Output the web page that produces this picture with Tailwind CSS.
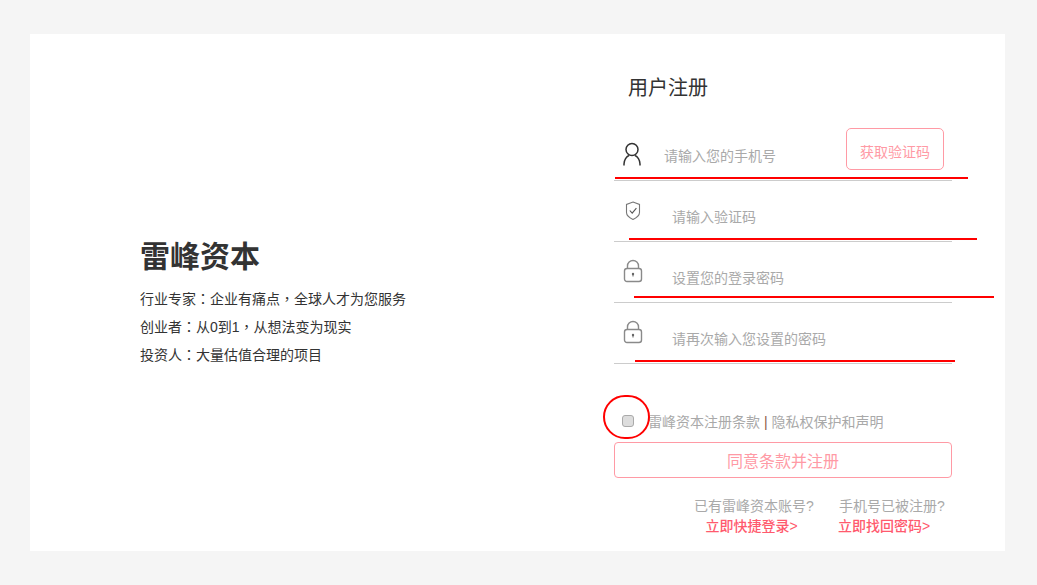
<!DOCTYPE html>
<html lang="zh-CN">
<head>
<meta charset="utf-8">
<script src="https://cdn.jsdelivr.net/npm/@tailwindcss/browser@4"></script>
</head>
<body class="bg-[#f5f5f5] font-['Liberation_Sans','Noto_Sans_CJK_SC',sans-serif]">
<div class="w-[1037px] h-[585px] pt-[34px] pl-[30px] overflow-hidden">
  <div class="relative w-[975px] h-[517px] bg-white flex">
    <div class="w-[584px] pl-[110px] pt-[201px]">
      <h1 class="text-[30px] leading-[44px] font-bold text-[#333]">雷峰资本</h1>
      <div class="mt-[6px] text-[14px] leading-[28px] text-[#333]">
        <p>行业专家<span lang="zh-TW" class="leading-none font-['Noto_Sans_CJK_TC']">：</span>企业有痛点<span lang="zh-TW" class="leading-none font-['Noto_Sans_CJK_TC']">，</span>全球人才为您服务</p>
        <p>创业者<span lang="zh-TW" class="leading-none font-['Noto_Sans_CJK_TC']">：</span>从0到1<span lang="zh-TW" class="leading-none font-['Noto_Sans_CJK_TC']">，</span>从想法变为现实</p>
        <p>投资人<span lang="zh-TW" class="leading-none font-['Noto_Sans_CJK_TC']">：</span>大量估值合理的项目</p>
      </div>
    </div>
    <div class="w-[338px]">
      <h2 class="mt-[40px] ml-[14px] text-[20px] leading-[28px] text-[#333]">用户注册</h2>
      <div class="mt-[18px]">
        <div class="h-[61px] border-b border-[#ccc] flex items-center">
          <svg class="ml-[9px] mt-[7px] w-[18px] h-[24px]" viewBox="0 0 18 24" fill="none" stroke="#333" stroke-width="1.5"><circle cx="9" cy="7.500" r="6"/><path d="M1 23.500v-1.500c0-4 2.500-7.500 5-8.500M17 23.500v-1.500c0-4-2.500-7.500-5-8.500"/></svg>
          <span class="ml-[23px] mt-[12px] text-[14px] text-[#a9a9a9]">请输入您的手机号</span>
          <button class="ml-auto mr-[8px] mb-[2px] pt-[6px] w-[98px] h-[42px] rounded-[5px] border border-[#ff9aa5] text-[14px] text-[#ff9aa5]">获取验证码</button>
        </div>
        <div class="h-[61px] border-b border-[#ccc] flex items-center">
          <svg class="ml-[11px] self-start mt-[20px] w-[16px] h-[20px]" viewBox="0 0 16 20" fill="none" stroke="#777" stroke-width="1.100"><path d="M8 1l6.500 2.500v8c0 3-3.500 5.500-6.500 7-3-1.500-6.500-4-6.500-7v-8z"/><path d="M4.800 9.500l2.400 2.700 4.200-5" stroke="#555"/></svg>
          <span class="ml-[31px] mt-[13px] text-[14px] text-[#a9a9a9]">请输入验证码</span>
        </div>
        <div class="h-[61px] border-b border-[#ccc] flex items-center">
          <svg class="ml-[9px] self-start mt-[17px] w-[20px] h-[24px]" viewBox="0 0 20 24" fill="none" stroke="#8a8a8a" stroke-width="1.400"><rect x="1.500" y="9.500" width="17" height="13" rx="2.500"/><path d="M4.500 9.500V7a5.500 5.500 0 0 1 11 0v2.500"/><circle cx="10" cy="15" r="1.200" fill="#666" stroke="none"/><path d="M10 15v2.500" stroke="#666" stroke-width="1"/></svg>
          <span class="ml-[29px] mt-[13px] text-[14px] text-[#a9a9a9]">设置您的登录密码</span>
        </div>
        <div class="h-[61px] border-b border-[#ccc] flex items-center">
          <svg class="ml-[9px] self-start mt-[17px] w-[20px] h-[24px]" viewBox="0 0 20 24" fill="none" stroke="#8a8a8a" stroke-width="1.400"><rect x="1.500" y="9.500" width="17" height="13" rx="2.500"/><path d="M4.500 9.500V7a5.500 5.500 0 0 1 11 0v2.500"/><circle cx="10" cy="15" r="1.200" fill="#666" stroke="none"/><path d="M10 15v2.500" stroke="#666" stroke-width="1"/></svg>
          <span class="ml-[29px] mt-[13px] text-[14px] text-[#a9a9a9]">请再次输入您设置的密码</span>
        </div>
      </div>
      <div class="mt-[47px] h-[20px] flex items-center pl-[8px] text-[14px] text-[#a9a9a9]">
        <input type="checkbox" class="appearance-none w-[12px] h-[12px] m-0 rounded-[3px] border border-[#aaa] bg-[#ddd]">
        <span class="ml-[14px] mt-[2px]">雷峰资本注册条款 <span class="text-[#8a5a44]">|</span> 隐私权保护和声明</span>
      </div>
      <button class="mt-[11px] pt-[4px] w-[338px] h-[36px] rounded-[4px] border border-[#ff9aa5] text-[16px] text-[#ff9aa5]">同意条款并注册</button>
      <div class="mt-[18px] flex text-[14px] leading-[20px] whitespace-nowrap">
        <div class="ml-[80px] w-[119px] text-center">
          <p class="text-[#a9a9a9]">已有雷峰资本账号?</p>
          <a class="block pr-[4px] font-medium text-[#ff5a6e]">立即快捷登录&gt;</a>
        </div>
        <div class="ml-[26px] w-[105px]">
          <p class="text-[#a9a9a9]">手机号已被注册?</p>
          <a class="block -ml-[1px] font-medium text-[#ff5a6e]">立即找回密码&gt;</a>
        </div>
      </div>
    </div>
    <div class="absolute left-[585px] top-[143px] w-[353px] h-[2px] bg-[#f00]"></div>
    <div class="absolute left-[599px] top-[204px] w-[348px] h-[2px] bg-[#f00]"></div>
    <div class="absolute left-[604px] top-[262px] w-[360px] h-[2px] bg-[#f00]"></div>
    <div class="absolute left-[605px] top-[326px] w-[320px] h-[2px] bg-[#f00]"></div>
    <div class="absolute left-[573px] top-[361px] w-[47px] h-[44px] rounded-full border-2 border-[#f00]"></div>
  </div>
</div>
</body>
</html>
